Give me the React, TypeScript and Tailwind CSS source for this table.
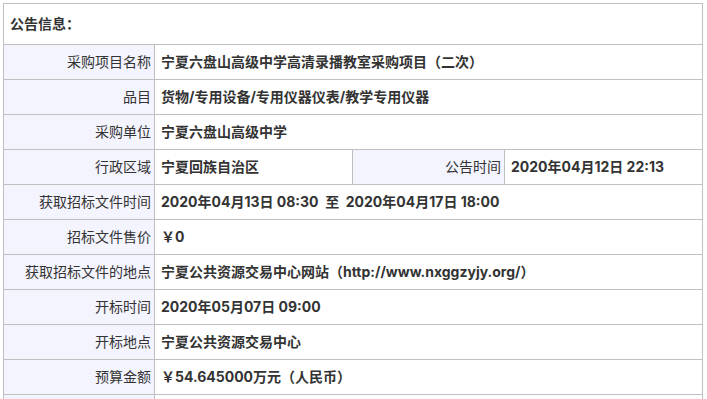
const rows: { label: string; value: string; extra?: { label: string; value: string } }[] = [
  { label: "采购项目名称", value: "宁夏六盘山高级中学高清录播教室采购项目（二次）" },
  { label: "品目", value: "货物/专用设备/专用仪器仪表/教学专用仪器" },
  { label: "采购单位", value: "宁夏六盘山高级中学" },
  {
    label: "行政区域",
    value: "宁夏回族自治区",
    extra: { label: "公告时间", value: "2020年04月12日 22:13" },
  },
  { label: "获取招标文件时间", value: "2020年04月13日 08:30  至  2020年04月17日 18:00" },
  { label: "招标文件售价", value: "￥0" },
  { label: "获取招标文件的地点", value: "宁夏公共资源交易中心网站（http://www.nxggzyjy.org/）" },
  { label: "开标时间", value: "2020年05月07日 09:00" },
  { label: "开标地点", value: "宁夏公共资源交易中心" },
  { label: "预算金额", value: "￥54.645000万元（人民币）" },
];

const labelCls =
  "h-[35px] border border-[#c0c0c0] bg-[#f3f4fe] pr-[3px] text-right font-normal text-[#333]";
const valueCls =
  "h-[35px] border border-[#c0c0c0] pl-[6px] text-left font-bold text-[#333] whitespace-pre font-['Inter','Noto_Sans_CJK_SC',sans-serif]";

export default function App() {
  return (
    <div
      className="h-[399px] overflow-hidden bg-white pl-[3px] pt-[3px] text-[14px] leading-5"
      style={{ fontFamily: '"Open Sans","Noto Sans CJK SC",sans-serif' }}
    >
      <table className="w-[700px] table-fixed border-collapse">
        <colgroup>
          <col className="w-[151px]" />
          <col className="w-[198px]" />
          <col className="w-[152px]" />
          <col />
        </colgroup>
        <tbody>
          <tr>
            <td colSpan={4} className="h-[41px] border border-[#c0c0c0] pl-[6px] font-bold text-[#333]">
              公告信息：
            </td>
          </tr>
          {rows.map((r) =>
            r.extra ? (
              <tr key={r.label}>
                <td className={labelCls}>{r.label}</td>
                <td className={valueCls}>{r.value}</td>
                <td className={labelCls}>{r.extra.label}</td>
                <td className={valueCls}>{r.extra.value}</td>
              </tr>
            ) : (
              <tr key={r.label}>
                <td className={labelCls}>{r.label}</td>
                <td colSpan={3} className={valueCls}>
                  {r.value}
                </td>
              </tr>
            )
          )}
          <tr>
            <td className={labelCls}>&nbsp;</td>
            <td colSpan={3} className={valueCls}>&nbsp;</td>
          </tr>
        </tbody>
      </table>
    </div>
  );
}
